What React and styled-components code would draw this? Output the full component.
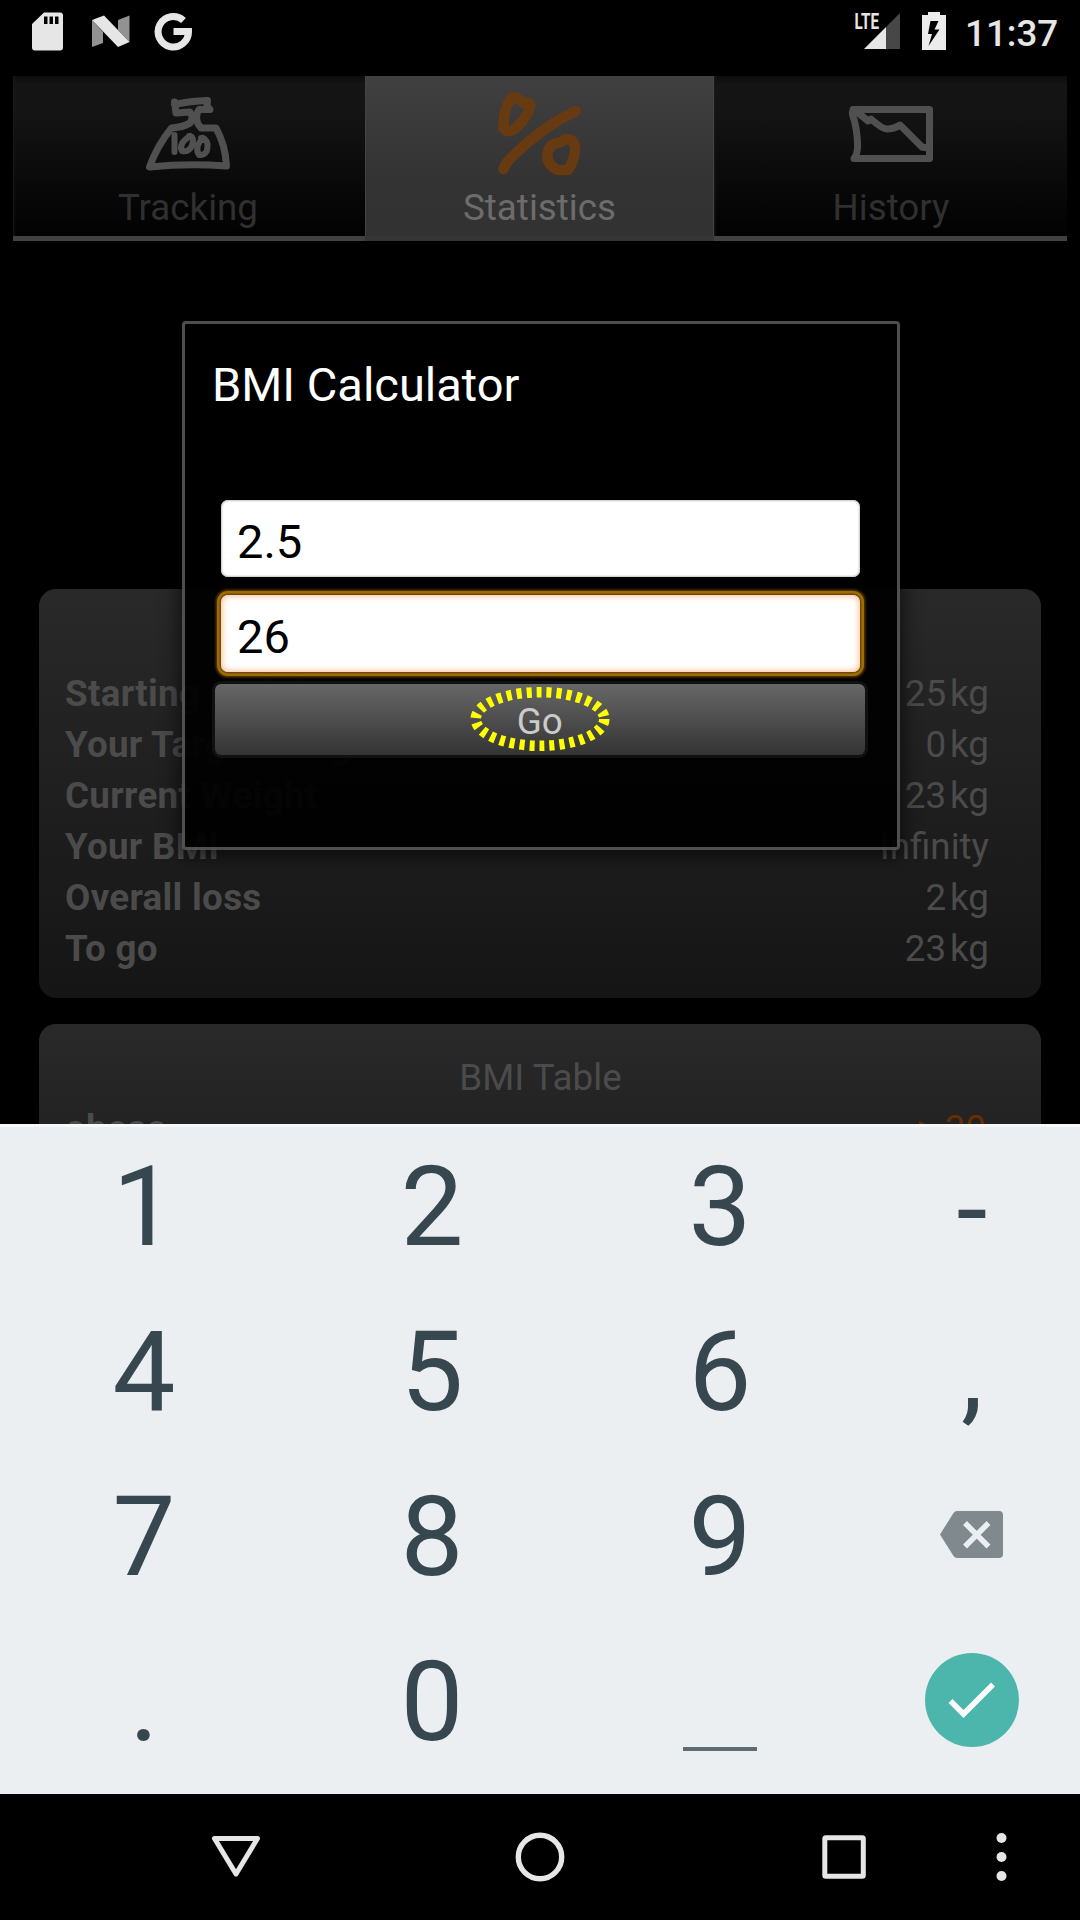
import React from "react";
import styled, { createGlobalStyle } from "styled-components";

const GlobalStyle = createGlobalStyle`
  * { box-sizing: border-box; }
  body { margin: 0; background: #000; }
`;

const Screen = styled.div`
  position: relative;
  display: flex;
  flex-direction: column;
  width: 1080px;
  height: 1920px;
  overflow: hidden;
  background: #000;
  font-family: Roboto, "Noto Sans", sans-serif;
  font-size: 36.75px;
`;

const StatusBar = styled.header`
  display: flex;
  justify-content: space-between;
  flex: none;
  height: 76px;
  padding: 12px 22px 0 32px;
`;

const StatusGroup = styled.div`
  display: flex;
  align-items: flex-start;
`;

const StatusIcon = styled.svg`
  display: block;
  flex: none;
  margin-right: ${(p) => p.$gap || 0}px;
`;

const Clock = styled.span`
  width: 93px;
  line-height: 44px;
  font-weight: 500;
  color: #e6e6e6;
  white-space: nowrap;
`;

const TabBar = styled.nav`
  display: grid;
  grid-template-columns: 352px 349px 353px;
  flex: none;
  height: 165px;
  margin-left: 13px;
  width: 1054px;
`;

const Tab = styled.div`
  display: flex;
  flex-direction: column;
  align-items: center;
  padding-left: ${(p) => (p.$shift > 0 ? p.$shift : 0)}px;
  padding-right: ${(p) => (p.$shift < 0 ? -p.$shift : 0)}px;
  color: ${(p) => (p.$active ? "#6c6c6c" : "#303030")};
  background: ${(p) =>
    p.$active
      ? "linear-gradient(#404040, #333 65%, #323232)"
      : "linear-gradient(#0c0c0c, #151515 8px, #141414 22%, #020202 97%)"};
  border-bottom: 5px solid ${(p) => (p.$active ? "#353535" : "#414141")};
  box-shadow: ${(p) => (p.$active ? "inset 1px 0 #444, inset -1px 0 #444" : "inset 3px 0 3px -2px #1c1c1c")};
`;

const TabIcon = styled.svg`
  display: block;
  height: 110px;
  flex: none;
`;

const TabLabel = styled.span`
  line-height: 44px;
`;

const Content = styled.main`
  display: flex;
  flex-direction: column;
  gap: 26px;
  flex: none;
  height: 883px;
  padding: 348px 39px 0;
  overflow: hidden;
`;

const Card = styled.section`
  flex: none;
  height: ${(p) => p.$height}px;
  padding: ${(p) => p.$top}px 52px 0 26px;
  border-radius: 17px;
  background: linear-gradient(#292929, #151515);
  color: #4b4b4b;
`;

const CardTitle = styled.div`
  margin-right: -27px;
  text-align: center;
  line-height: 51px;
`;

const Row = styled.div`
  display: flex;
  justify-content: space-between;
  height: 51px;
  line-height: 51px;
`;

const Label = styled.span`
  font-weight: 700;
  letter-spacing: 0.3px;
`;

const Value = styled.span`
  display: flex;
  gap: 4px;
  padding-right: ${(p) => p.$inset || 0}px;
  color: ${(p) => p.$color || "inherit"};
`;

const Dialog = styled.div`
  position: absolute;
  left: 182px;
  top: 321px;
  width: 717.5px;
  height: 529px;
  display: flex;
  flex-direction: column;
  padding: 32px 32px 0 30px;
  border: 3px solid rgba(83, 83, 83, 0.94);
  border-radius: 4px;
  background: rgba(0, 0, 0, 0.94);
  background-clip: padding-box;
  box-shadow: 0 3px 20px 2px rgba(0, 0, 0, 0.65);
`;

const DialogTitle = styled.h1`
  margin: 0 0 88px -3px;
  font-size: 47px;
  font-weight: 400;
  line-height: 57px;
  height: 56px;
  color: #fff;
`;

const Field = styled.div`
  flex: none;
  height: 77px;
  margin: 0 5px ${(p) => p.$below}px 6px;
  padding: 4px 0 0 16px;
  border-radius: 7px;
  background: #fff;
  color: #000;
  font-size: 47px;
  line-height: 75px;
  box-shadow: ${(p) =>
    p.$focused
      ? "inset 0 0 6px 1px #f3bd8d, 0 0 0 1.5px #6f4a10, 0 0 0 4px #a06c00, 0 0 3px 4.5px #6b4700"
      : "inset 0 0 2px 1px #c4c4c4"};
`;

const GoButton = styled.div`
  position: relative;
  flex: none;
  height: 71px;
  padding-top: 2px;
  border-radius: 6px;
  background: linear-gradient(#676767, #343434);
  box-shadow: 0 0 0 3px #111;
  color: #cbcbcb;
  line-height: 71px;
  text-align: center;
`;

const TapRing = styled.svg`
  position: absolute;
  left: 50%;
  top: 0;
  margin-left: -75px;
`;

const Keypad = styled.section`
  position: relative;
  display: grid;
  grid-template-columns: 288px 288px 288px 216px;
  grid-auto-rows: 165px;
  flex: none;
  height: 670px;
  background: #ebeff2;
  box-shadow: inset 0 3px #f6f8f9;
`;

const Key = styled.div`
  display: flex;
  align-items: center;
  justify-content: center;
  height: 165px;
  padding-top: ${(p) => p.$drop || 0}px;
  font-size: 112px;
  line-height: 164px;
  color: #37474f;
`;

const SpaceMark = styled.span`
  width: 74px;
  height: 4px;
  margin-top: 94px;
  background: #5f6c71;
`;

const DeleteIcon = styled.svg`
  display: block;
  margin-top: -4px;
`;

const DoneCircle = styled.span`
  display: flex;
  width: 94px;
  height: 94px;
  margin-top: -4px;
  border-radius: 50%;
  background: #4db6ac;
`;

const NavBar = styled.footer`
  display: flex;
  align-items: center;
  flex: none;
  height: 126px;
`;

const NavSlot = styled.div`
  display: flex;
  justify-content: center;
  width: ${(p) => p.$width}px;
  margin-left: ${(p) => p.$left || 0}px;
`;

const stats = [
  ["Starting Weight", "25", "kg"],
  ["Your Target Weight", "0", "kg"],
  ["Current Weight", "23", "kg"],
  ["Your BMI", "Infinity"],
  ["Overall loss", "2", "kg"],
  ["To go", "23", "kg"],
];

const ScaleIcon = () => (
  <TabIcon width="84" height="110" viewBox="146 76 84 110" fill="none" stroke="#505050" strokeWidth="7" strokeLinecap="round" strokeLinejoin="round">
    <path d="M174.500 102 L176 113 L190 112 Q194 118 190 123 Q184 127 171.500 128 Q157 146 149.500 167 Q188 163 226.500 166 Q225.500 145 216 128 L201 128 Q193 119 199 109.500 L210 109.500 L207 106 L207.500 100.500 Q190 101 174.500 104.500" />
    <path d="M174.500 135 V152" strokeWidth="6" />
    <path d="M190 136 Q178 144 182 151 Q191 153 193 141 Q193 136 189 136 M203 138 Q194 147 199 155 Q208 156 207.500 144 Q206 138 201 138" strokeWidth="6" />
  </TabIcon>
);

const PercentIcon = () => (
  <TabIcon width="84" height="110" viewBox="497 76 84 110" fill="none" stroke="#683a11" strokeWidth="10.500" strokeLinecap="round" strokeLinejoin="round">
    <path d="M511 97.500 Q502.500 107 502.500 128 Q507 134 515 128 Q527 117 529.500 105 Q528 101 525 104 L521 102 Q517 96.500 511 97.500 Z" />
    <path d="M574.500 111 Q540 128 513 155 Q505 162 502.500 169" />
    <path d="M564 139.500 Q575 138 574 152 Q572 163 567 170 L557 170 Q545 165 546.500 153 Q549 143 559 142.500 Z" />
  </TabIcon>
);

const HistoryIcon = () => (
  <TabIcon width="84" height="110" viewBox="849 76 84 110" fill="none" stroke="#505050" strokeWidth="7" strokeLinecap="round" strokeLinejoin="round">
    <path d="M853 109.500 H929.500 V158.500 H854 Q858 154 857.500 143 Q857 127 852 113" />
    <path d="M856 111 L868 121 L871 119 Q882 129 887 129 Q894 129 900 125 L922 147 L928 148" />
  </TabIcon>
);

const digitKeys = ["1", "2", "3", "-", "4", "5", "6", ",", "7", "8", "9"];

export default function App() {
  return (
    <>
      <GlobalStyle />
      <Screen>
        <StatusBar>
          <StatusGroup>
            <StatusIcon $gap={28} width="31" height="39" viewBox="0 0 31 39">
              <path fill="#e6e6e6" fillRule="evenodd" d="M12 .5 H28 Q31 .5 31 3.500 V35.500 Q31 38.500 28 38.500 H3 Q0 38.500 0 35.500 V12 Z M12 4.500 V12 H15.500 V4.500 Z M17.500 4.500 V12 H21 V4.500 Z M23 4.500 V12 H26.500 V4.500 Z" />
            </StatusIcon>
            <StatusIcon $gap={24} width="39" height="39" viewBox="91 12 39 39">
              <path fill="#929292" d="M92 20 L103 32 V43 L92 47 Z M118 20 L129.500 15.500 V42 L118 30 Z" />
              <path fill="#e6e6e6" d="M92 20 L104 15.500 L129.500 42 L118 47 Z" />
            </StatusIcon>
            <StatusIcon width="39" height="39" viewBox="154 12 39 39">
              <path fill="none" stroke="#e6e6e6" strokeWidth="7" d="M183.500 20.500 A15.200 15.200 0 1 0 188.500 31.500 H173.500" />
            </StatusIcon>
          </StatusGroup>
          <StatusGroup>
            <StatusIcon $gap={21} width="47" height="39" viewBox="854 12 47 39">
              <path fill="#474747" d="M886 27 L900 13 V49 H886 Z" />
              <path fill="#e6e6e6" d="M864 49 L886 27 V49 Z" />
              <text x="854.500" y="29" fill="#e6e6e6" fontFamily="Roboto, sans-serif" fontSize="22" fontWeight="700" textLength="24.500" lengthAdjust="spacingAndGlyphs">LTE</text>
            </StatusIcon>
            <StatusIcon $gap={19} width="24" height="39" viewBox="922 12 24 39">
              <path fill="#ececec" fillRule="evenodd" d="M928 12 H940 V15 H946 V50 H922 V15 H928 Z M930.500 21 L928 34 H932 L928.500 46 L939.500 29.500 H934.500 L938.500 21 Z" />
            </StatusIcon>
            <Clock>11:37</Clock>
          </StatusGroup>
        </StatusBar>

        <TabBar>
          <Tab $shift={-2}><ScaleIcon /><TabLabel>Tracking</TabLabel></Tab>
          <Tab $active><PercentIcon /><TabLabel>Statistics</TabLabel></Tab>
          <Tab $shift={1}><HistoryIcon /><TabLabel>History</TabLabel></Tab>
        </TabBar>

        <Content>
          <Card $height={409} $top={79}>
            {stats.map(([label, amount, unit]) => (
              <Row key={label}>
                <Label>{label}</Label>
                <Value><span>{amount}</span>{unit && <span>{unit}</span>}</Value>
              </Row>
            ))}
          </Card>
          <Card $height={320} $top={28}>
            <CardTitle>BMI Table</CardTitle>
            <Row>
              <Label>obese</Label>
              <Value $color="#6a2c00" $inset={3}>&gt; 30</Value>
            </Row>
          </Card>
        </Content>

        <Keypad>
          {digitKeys.map((k) => <Key key={k} $drop={k === "-" ? 6 : 0}>{k}</Key>)}
          <Key>
            <DeleteIcon width="64" height="48" viewBox="940 1511 64 48">
              <path fill="#80898d" d="M957 1511 H999 Q1003 1511 1003 1515 V1554 Q1003 1558 999 1558 H957 Q955 1558 953.500 1556 L940 1534.500 L953.500 1513 Q955 1511 957 1511 Z" />
              <path stroke="#ebeff2" strokeWidth="5.500" d="M965 1523 L988.500 1546.500 M988.500 1523 L965 1546.500" />
            </DeleteIcon>
          </Key>
          <Key>.</Key>
          <Key>0</Key>
          <Key><SpaceMark /></Key>
          <Key>
            <DoneCircle>
              <svg width="94" height="94" viewBox="925 1652.500 94 94">
                <path fill="none" stroke="#fff" strokeWidth="5.500" d="M950.500 1700.500 L963.500 1713.500 L993 1684" />
              </svg>
            </DoneCircle>
          </Key>
        </Keypad>

        <NavBar>
          <NavSlot $width={304} $left={84}>
            <svg width="50" height="50" viewBox="0 0 50 50"><path fill="none" stroke="#e6e6e6" strokeWidth="5" strokeLinejoin="round" d="M3.500 6.500 H46.500 L25 42 Z" /></svg>
          </NavSlot>
          <NavSlot $width={304}>
            <svg width="50" height="50" viewBox="0 0 50 50"><circle cx="25" cy="25" r="21.700" fill="none" stroke="#e6e6e6" strokeWidth="5.400" /></svg>
          </NavSlot>
          <NavSlot $width={304}>
            <svg width="50" height="50" viewBox="0 0 50 50"><rect x="5.800" y="5.800" width="38.500" height="38.500" rx="1" fill="none" stroke="#e6e6e6" strokeWidth="5" /></svg>
          </NavSlot>
          <NavSlot $width={12}>
            <svg width="12" height="50" viewBox="0 0 12 50" fill="#e6e6e6"><circle cx="5.500" cy="6" r="5" /><circle cx="5.500" cy="25" r="5" /><circle cx="5.500" cy="44" r="5" /></svg>
          </NavSlot>
        </NavBar>

        <Dialog>
          <DialogTitle>BMI Calculator</DialogTitle>
          <Field $below={18}>2.5</Field>
          <Field $focused $below={12}>26</Field>
          <GoButton>
            Go
            <TapRing width="150" height="70" viewBox="464.600 684 150 70">
              <ellipse cx="539.600" cy="719" rx="64.300" ry="26.800" fill="none" stroke="#ff0" strokeWidth="10.500" strokeDasharray="5 5" />
            </TapRing>
          </GoButton>
        </Dialog>
      </Screen>
    </>
  );
}
